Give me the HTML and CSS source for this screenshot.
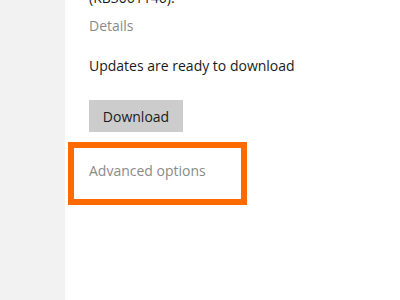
FILE: index.html
```html
<!DOCTYPE html>
<html lang="en">
<head>
  <meta charset="UTF-8">
  <title>Windows Update</title>
  <link rel="stylesheet" href="styles.css">
</head>
<body>
  <div class="sidebar"></div>
  <div class="main">
    <p class="kb">(KB3061146).</p>
    <a class="details">Details</a>
    <p class="status">Updates are ready to download</p>
    <button class="download">Download</button>
    <div class="highlight">
      <a class="advanced">Advanced options</a>
    </div>
  </div>
</body>
</html>
```

FILE: styles.css
```css
:root {
  --side: #f2f2f2;
  --text: #1a1a1a;
  --muted: #8a8a8a;
  --button: #cccccc;
  --mark: #ff6a00;
}

html, body {
  height: 100%;
}

body {
  margin: 0;
  display: flex;
  background: #fff;
  font-family: 'Open Sans', 'Noto Sans', sans-serif;
  font-size: 14px;
  color: var(--text);
  overflow: hidden;
}

.sidebar {
  width: 65px;
  flex-shrink: 0;
  background: var(--side);
}

.main {
  flex: 1;
  padding-left: 24px;
  display: flex;
  flex-direction: column;
  align-items: flex-start;
}

.kb {
  margin: -12px 0 0;
  line-height: 20px;
}

.details {
  display: block;
  margin-top: 8px;
  line-height: 20px;
  color: var(--muted);
}

.status {
  margin: 20px 0 0;
  line-height: 20px;
}

.download {
  margin-top: 24px;
  width: 94px;
  height: 32px;
  border: none;
  background: var(--button);
  font-family: inherit;
  font-size: 14px;
  color: var(--text);
  padding: 0;
}

.highlight {
  box-sizing: border-box;
  margin: 10px 0 0 -21px;
  width: 179px;
  height: 63px;
  border: 6px solid var(--mark);
  padding-left: 15px;
  display: flex;
  align-items: center;
}

.advanced {
  color: var(--muted);
  line-height: 20px;
  margin-top: -5px;
}
```
